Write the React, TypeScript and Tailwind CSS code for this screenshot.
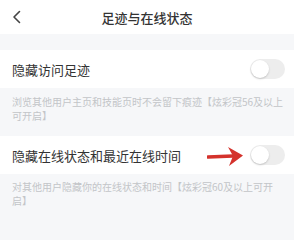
import React from "react";

function Toggle() {
  return (
    <div className="relative w-[35px] h-[20px] rounded-full bg-[#ededed]">
      <div className="absolute left-[1px] top-[1px] w-[18px] h-[18px] rounded-full bg-white shadow-[0_1px_2px_rgba(0,0,0,0.18)]" />
    </div>
  );
}

export default function App() {
  const font = { fontFamily: '"Noto Sans CJK SC", "Noto Sans", sans-serif' };
  return (
    <div className="w-[294px] h-[240px] bg-[#f6f7f9] overflow-hidden" style={font}>
      <div className="relative h-[34px] bg-white flex items-center justify-center">
        <svg className="absolute left-[11px] top-[10px]" width="12" height="14" viewBox="0 0 12 14">
          <path d="M8.5 1.5 L3 7 L8.5 12.5" fill="none" stroke="#444" strokeWidth="1.6" strokeLinecap="round" strokeLinejoin="round" />
        </svg>
        <span className="text-[13px] font-medium text-[#333] leading-none">足迹与在线状态</span>
      </div>
      <div className="h-[16px]" />
      <div className="h-[38px] bg-white flex items-center justify-between pl-[12px] pr-[9px]">
        <span className="text-[13px] text-[#333] leading-none">隐藏访问足迹</span>
        <Toggle />
      </div>
      <div className="h-[48px] pl-[12px] pt-[7px] text-[10px] leading-[14px] text-[#c3c5c8]">
        浏览其他用户主页和技能页时不会留下痕迹【炫彩冠56及以上
        <br />
        可开启】
      </div>
      <div className="relative h-[38px] bg-white flex items-center justify-between pl-[12px] pr-[9px]">
        <span className="text-[13px] text-[#333] leading-none">隐藏在线状态和最近在线时间</span>
        <svg className="absolute left-[207px] top-[9px]" width="38" height="22" viewBox="0 0 38 22">
          <path d="M1 12 L26 11" stroke="#d4322c" strokeWidth="3.5" strokeLinecap="round" />
          <path d="M21 2 L36 10.5 L22 21 L26 11 Z" fill="#d4322c" />
        </svg>
        <Toggle />
      </div>
      <div className="pl-[12px] pt-[6px] text-[10px] leading-[14px] text-[#c3c5c8]">
        对其他用户隐藏你的在线状态和时间【炫彩冠60及以上可开
        <br />
        启】
      </div>
    </div>
  );
}
